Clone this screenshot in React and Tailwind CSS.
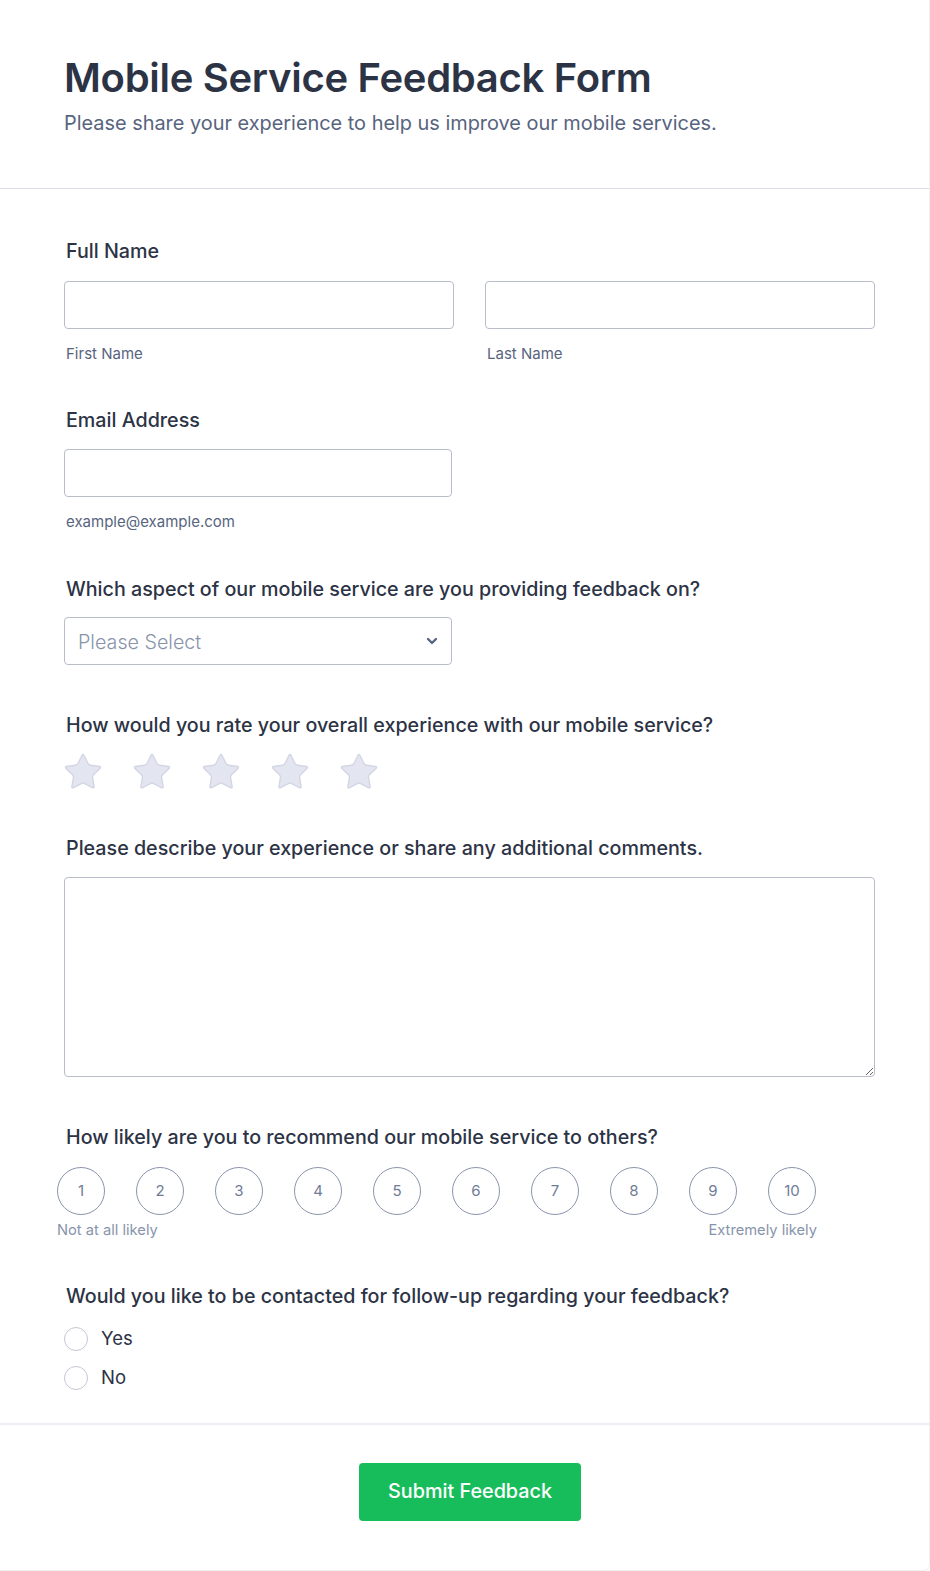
import React, { useState } from "react";

const Star = () => (
  <svg width="42" height="42" viewBox="0 0 24 24" className="shrink-0">
    <path
      d="M11.525 2.295a.53.53 0 0 1 .95 0l2.31 4.679a2.123 2.123 0 0 0 1.595 1.16l5.166.756a.53.53 0 0 1 .294.904l-3.736 3.638a2.123 2.123 0 0 0-.611 1.878l.882 5.14a.53.53 0 0 1-.771.56l-4.618-2.428a2.122 2.122 0 0 0-1.973 0L6.396 21.01a.53.53 0 0 1-.77-.56l.881-5.139a2.122 2.122 0 0 0-.611-1.879L2.16 9.795a.53.53 0 0 1 .294-.906l5.165-.755a2.122 2.122 0 0 0 1.597-1.16z"
      fill="#e3e5f0"
      stroke="#d3d7e3"
      strokeWidth="0.8"
      strokeLinejoin="round"
    />
  </svg>
);

const Label = ({ children, className = "" }) => (
  <p className={"px-[2px] text-[19.7px] leading-[28px] font-medium text-[#2c3345] " + className}>
    {children}
  </p>
);

const Sub = ({ children, className = "" }) => (
  <p className={"px-[2px] text-[15px] leading-5 text-[#57647e] " + className}>{children}</p>
);

const inputCls =
  "block h-12 rounded-[4px] border border-[#b8bdc9] bg-white px-3 text-[16px] text-[#2c3345] outline-none";

export default function App() {
  const [contact, setContact] = useState("");

  return (
    <div className="min-h-[1570px] w-[930px] bg-white font-['Inter',sans-serif] border-r border-b border-[#eef0f5] rounded-br-md">
      {/* Header */}
      <div className="px-16 pt-[54px] pb-[51px] border-b border-[#dcdfea]">
        <h1 className="text-[40px] leading-[48px] font-semibold tracking-[-0.3px] text-[#2c3345]">
          Mobile Service Feedback Form
        </h1>
        <p className="mt-[7px] text-[19.9px] leading-[28px] text-[#57647e]">
          Please share your experience to help us improve our mobile services.
        </p>
      </div>

      {/* Body */}
      <div className="px-16 pt-[48px] pb-[33px]">
        {/* Full name */}
        <Label>Full Name</Label>
        <div className="mt-[16px] flex gap-[31px] w-[811px]">
          <div className="flex-1">
            <input className={inputCls + " w-full"} />
            <Sub className="mt-[15px]">First Name</Sub>
          </div>
          <div className="flex-1">
            <input className={inputCls + " w-full"} />
            <Sub className="mt-[15px]">Last Name</Sub>
          </div>
        </div>

        {/* Email */}
        <Label className="mt-[42px]">Email Address</Label>
        <input className={inputCls + " mt-[15px] w-[388px]"} />
        <Sub className="mt-[15px]">example@example.com</Sub>

        {/* Aspect */}
        <Label className="mt-[43px]">
          Which aspect of our mobile service are you providing feedback on?
        </Label>
        <div className="mt-[14px] w-[388px] h-12 rounded-[4px] border border-[#b8bdc9] flex items-center justify-between pl-[13px] pr-[11px]">
          <span className="mt-[3px] text-[19.7px] font-light text-[#8894ab]">Please Select</span>
          <svg width="16" height="16" viewBox="0 0 24 24" fill="none" stroke="#57647e" strokeWidth="3.5" strokeLinecap="round" strokeLinejoin="round">
            <path d="m6 9 6 6 6-6" />
          </svg>
        </div>

        {/* Rating */}
        <Label className="mt-[46px]">
          How would you rate your overall experience with our mobile service?
        </Label>
        <div className="mt-[12px] flex gap-[27px] -ml-[2px]">
          <Star />
          <Star />
          <Star />
          <Star />
          <Star />
        </div>

        {/* Comments */}
        <Label className="mt-[41px]">
          Please describe your experience or share any additional comments.
        </Label>
        <textarea className="mt-[15px] block w-[811px] h-[200px] rounded-[4px] border border-[#b8bdc9] p-3 text-[16px] outline-none" />

        {/* Recommend */}
        <Label className="mt-[46px]">
          How likely are you to recommend our mobile service to others?
        </Label>
        <div className="-ml-[7px] mt-[16px] w-[760px]">
          <div className="flex gap-[31px]">
            {[1, 2, 3, 4, 5, 6, 7, 8, 9, 10].map((n) => (
              <div
                key={n}
                className="w-12 h-12 rounded-full border border-[#8a94ad] flex items-center justify-center text-[15px] text-[#6f7c96]"
              >
                {n}
              </div>
            ))}
          </div>
          <div className="mt-[5px] flex justify-between text-[14.7px] leading-5 text-[#8894ab]">
            <span>Not at all likely</span>
            <span>Extremely likely</span>
          </div>
        </div>

        {/* Contact */}
        <Label className="mt-[42px]">
          Would you like to be contacted for follow-up regarding your feedback?
        </Label>
        <div className="mt-[17px] flex flex-col gap-[15px]">
          {["Yes", "No"].map((opt) => (
            <label key={opt} className="flex items-center h-6 gap-[13px] cursor-pointer">
              <span
                onClick={() => setContact(opt)}
                className="w-6 h-6 rounded-full border border-[#c3c8d5] bg-white flex items-center justify-center"
              >
                {contact === opt && <span className="w-3 h-3 rounded-full bg-[#2e69ff]" />}
              </span>
              <span className="text-[18.5px] text-[#2c3345]">{opt}</span>
            </label>
          ))}
        </div>
      </div>

      {/* Footer */}
      <div className="border-t-2 border-[#eceef3] pt-[38px] pb-[49px] pl-[11px] flex justify-center">
        <button className="w-[222px] h-[58px] rounded-[4px] bg-[#18bd5b] text-white text-[19.8px] font-medium">
          Submit Feedback
        </button>
      </div>
    </div>
  );
}
